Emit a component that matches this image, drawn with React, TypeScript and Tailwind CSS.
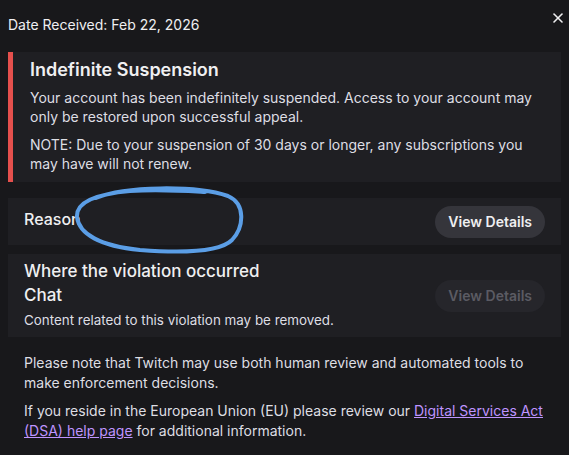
import { X } from "lucide-react";

function ViewDetails({ disabled = false }: { disabled?: boolean }) {
  return (
    <button
      type="button"
      disabled={disabled}
      className={
        disabled
          ? "h-8 shrink-0 self-center rounded-full bg-[#26262b] px-[13px] text-[14px] font-semibold text-[#5b5b63]"
          : "h-8 shrink-0 self-center rounded-full bg-[#35353b] px-[13px] text-[14px] font-semibold text-[#efeff1]"
      }
    >
      View Details
    </button>
  );
}

export default function App() {
  return (
    <div
      className="relative h-[455px] w-[569px] overflow-hidden bg-[#18181b] text-[#dedee3]"
      style={{ fontFamily: "Inter, 'Noto Sans', sans-serif" }}
    >
      {/* header */}
      <div className="flex items-start justify-between pl-2 pr-[3px] pt-[15px]">
        <span className="text-[14px] leading-5 text-[#efeff1]">Date Received: Feb 22, 2026</span>
        <X className="-mt-[5px] h-[16px] w-[16px] text-[#efeff1]" strokeWidth={2.4} />
      </div>

      {/* suspension notice */}
      <div className="mx-2 mt-[17px] flex bg-[#1f1f23]">
        <div className="w-[5px] shrink-0 bg-[#e5504d]" />
        <div className="flex flex-col pb-[9px] pl-[17px] pr-4 pt-[6px]">
          <h2 className="text-[18px] font-semibold leading-6 text-[#efeff1]">Indefinite Suspension</h2>
          <p className="mt-[6px] text-[14px] leading-[19px]">
            Your account has been indefinitely suspended. Access to your account may only be restored upon successful
            appeal.
          </p>
          <p className="mt-[9px] text-[14px] leading-[19px]">
            NOTE: Due to your suspension of 30 days or longer, any subscriptions you may have will not renew.
          </p>
        </div>
      </div>

      {/* reason */}
      <div className="mx-2 mt-4 flex h-[47px] items-center justify-between bg-[#1f1f23] pl-4 pr-4">
        <span className="mb-[6px] text-[16px] font-medium text-[#efeff1]">Reason</span>
        <ViewDetails />
      </div>

      {/* where */}
      <div className="mx-2 mt-[9px] flex h-[83px] justify-between bg-[#1f1f23] pl-4 pr-4">
        <div className="flex flex-col pt-[5px]">
          <span className="text-[17px] font-medium leading-6 text-[#efeff1]">Where the violation occurred</span>
          <span className="text-[17px] font-medium leading-6 text-[#efeff1]">Chat</span>
          <span className="mt-[4px] text-[13.4px] leading-[18px]">Content related to this violation may be removed.</span>
        </div>
        <ViewDetails disabled />
      </div>

      {/* footer */}
      <div className="flex flex-col gap-2 px-6 pt-[16px] text-[14px] leading-5">
        <p>Please note that Twitch may use both human review and automated tools to make enforcement decisions.</p>
        <p>
          If you reside in the European Union (EU) please review our{" "}
          <a href="#" className="text-[#bf94ff] underline">
            Digital Services Act (DSA) help page
          </a>{" "}
          for additional information.
        </p>
      </div>

      {/* hand-drawn annotation */}
      <svg className="pointer-events-none absolute left-0 top-0" width="569" height="455">
        <path
          d="M 96 198 C 125 186, 195 185, 228 196 C 246 204, 244 227, 232 240 C 220 252, 180 253, 140 250 C 100 246, 79 234, 77 217 C 76 202, 96 194, 130 191 C 160 189, 188 191, 205 192"
          fill="none"
          stroke="#5b9ee6"
          strokeWidth="4"
          strokeLinecap="round"
        />
      </svg>
    </div>
  );
}
